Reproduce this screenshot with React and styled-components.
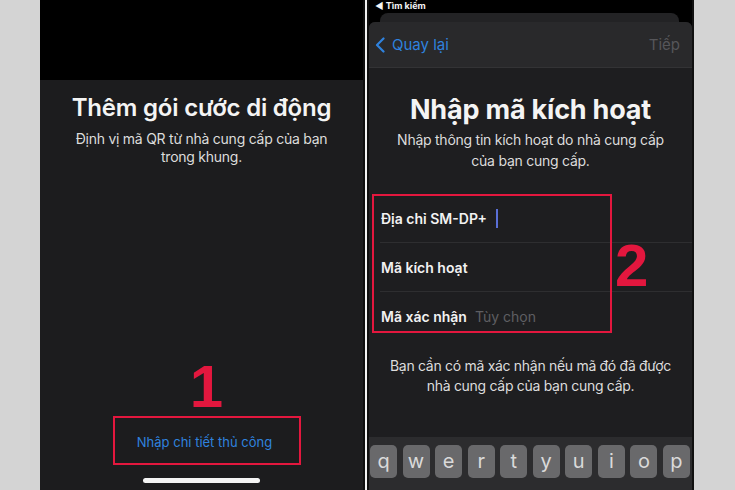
import React from "react";
import styled, { createGlobalStyle } from "styled-components";

const GlobalStyle = createGlobalStyle`
  * { box-sizing: border-box; }
  html, body { margin: 0; padding: 0; }
  body {
    width: 735px;
    height: 490px;
    overflow: hidden;
    background: #d4d4d4;
    font-family: Inter, "Noto Sans", sans-serif;
  }
`;

const keys = ["q", "w", "e", "r", "t", "y", "u", "i", "o", "p"];

const App = () => {
    return (
        <>
            <GlobalStyle />
            <Page>
                <Phone width={323}>
                    <Camera />
                    <ScanBody>
                        <Title size={24}>Thêm gói cước di động</Title>
                        <Subtitle gap={7}>
                            Định vị mã QR từ nhà cung cấp của bạn
                            <br />
                            trong khung.
                        </Subtitle>
                        <BottomGroup>
                            <Numeral>1</Numeral>
                            <ManualBox>
                                <LinkText>Nhập chi tiết thủ công</LinkText>
                            </ManualBox>
                            <HomeBar />
                        </BottomGroup>
                    </ScanBody>
                </Phone>
                <Divider />
                <Phone width={323} edge>
                    <StatusBar>◄ Tìm kiếm</StatusBar>
                    <BackCard />
                    <Sheet>
                        <NavBar>
                            <BackButton>
                                <svg width="10" height="16" viewBox="0 0 10 16" fill="none">
                                    <path d="M8.5 1.5L2 8l6.5 6.5" stroke="#2f82de" strokeWidth="2.2" strokeLinecap="round" strokeLinejoin="round" />
                                </svg>
                                Quay lại
                            </BackButton>
                            <NextButton>Tiếp</NextButton>
                        </NavBar>
                        <SheetBody>
                            <Title size={27} top={25} bold>Nhập mã kích hoạt</Title>
                            <Subtitle gap={3} lh={21}>
                                Nhập thông tin kích hoạt do nhà cung cấp
                                <br />
                                của bạn cung cấp.
                            </Subtitle>
                            <Form>
                                <Row>
                                    <Label>Địa chỉ SM-DP+</Label>
                                    <Cursor />
                                </Row>
                                <Row>
                                    <Label>Mã kích hoạt</Label>
                                </Row>
                                <Row last>
                                    <Label>Mã xác nhận</Label>
                                    <Placeholder>Tùy chọn</Placeholder>
                                </Row>
                                <RedFrame />
                                <FormNumeral>2</FormNumeral>
                            </Form>
                            <Footnote>
                                Bạn cần có mã xác nhận nếu mã đó đã được
                                <br />
                                nhà cung cấp của bạn cung cấp.
                            </Footnote>
                            <Keyboard>
                                {keys.map(k => <Key key={k}>{k}</Key>)}
                            </Keyboard>
                        </SheetBody>
                    </Sheet>
                </Phone>
            </Page>
        </>
    );
};

const Page = styled.div`
    display: flex;
    height: 490px;
    padding-left: 40px;
`;

const Phone = styled.div`
    width: ${p => p.width}px;
    height: 490px;
    display: flex;
    flex-direction: column;
    background: #000;
    overflow: hidden;
    border-right: ${p => (p.edge ? "2px solid #111" : "none")};
    box-sizing: content-box;
`;

const Divider = styled.div`
    width: 6px;
    height: 490px;
    background: #f2f2f2;
    border-left: 2px solid #0e0e0e;
    border-right: 2px solid #0e0e0e;
`;

const Camera = styled.div`
    height: 80px;
    flex-shrink: 0;
    background: #000;
`;

const ScanBody = styled.div`
    flex: 1;
    display: flex;
    flex-direction: column;
    align-items: center;
    background: #1c1c1e;
    padding-top: 13px;
`;

const Title = styled.h1`
    margin: ${p => p.top || 0}px 0 0;
    font-size: ${p => p.size}px;
    line-height: ${p => p.size + 6}px;
    font-weight: ${p => (p.bold ? 700 : 600)};
    color: #f4f4f4;
    text-align: center;
    letter-spacing: -0.2px;
`;

const Subtitle = styled.p`
    margin: ${p => p.gap}px 0 0;
    font-size: 14px;
    line-height: ${p => p.lh || 18}px;
    color: #dcdcdc;
    text-align: center;
    letter-spacing: -0.25px;
`;

const BottomGroup = styled.div`
    margin-top: auto;
    display: flex;
    flex-direction: column;
    align-items: center;
    padding-bottom: 7px;
`;

const Numeral = styled.div`
    font-family: "Liberation Sans", Arial, sans-serif;
    font-weight: 700;
    font-size: 60px;
    line-height: 59px;
    color: #e3173e;
    margin-left: 10px;
`;

const ManualBox = styled.div`
    width: 188px;
    height: 49px;
    border: 2px solid #e3173e;
    display: flex;
    align-items: center;
    justify-content: center;
    margin-left: 10px;
`;

const LinkText = styled.span`
    font-size: 13px;
    color: #2f82de;
    padding-top: 3px;
    margin-left: -4px;
`;

const HomeBar = styled.div`
    width: 117px;
    height: 5px;
    border-radius: 3px;
    background: #f4f4f4;
    margin-top: 13px;
`;

const StatusBar = styled.div`
    height: 13px;
    flex-shrink: 0;
    padding-left: 6px;
    font-size: 9px;
    line-height: 11px;
    font-weight: 700;
    color: #f4f4f4;
    background: #000;
`;

const BackCard = styled.div`
    height: 9px;
    flex-shrink: 0;
    margin: 0 13px 0 11px;
    border-radius: 8px 8px 0 0;
    background: #232325;
`;

const Sheet = styled.div`
    flex: 1;
    display: flex;
    flex-direction: column;
    border-radius: 6px 6px 0 0;
    overflow: hidden;
    background: #1e1e20;
`;

const NavBar = styled.div`
    height: 46px;
    flex-shrink: 0;
    display: flex;
    align-items: center;
    justify-content: space-between;
    padding: 0 12px 0 6px;
    background: #29292b;
    border-bottom: 1px solid #333335;
`;

const BackButton = styled.div`
    display: flex;
    align-items: center;
    gap: 7px;
    font-size: 15px;
    color: #2f82de;
`;

const NextButton = styled.div`
    font-size: 15px;
    color: #56565a;
`;

const SheetBody = styled.div`
    flex: 1;
    display: flex;
    flex-direction: column;
    align-items: center;
`;

const Form = styled.div`
    position: relative;
    align-self: stretch;
    margin-top: 23px;
`;

const Row = styled.div`
    height: 49px;
    display: flex;
    align-items: center;
    gap: 8px;
    padding-left: 12px;
    position: relative;
    &::after {
        content: "";
        display: ${p => (p.last ? "none" : "block")};
        position: absolute;
        left: 11px;
        right: 0;
        bottom: 0;
        height: 1px;
        background: #2e2e30;
    }
`;

const Label = styled.span`
    font-size: 14px;
    font-weight: 600;
    color: #f2f2f2;
`;

const Placeholder = styled.span`
    font-size: 14px;
    color: #5e5e62;
`;

const Cursor = styled.span`
    width: 2px;
    height: 19px;
    background: #5a6fd6;
    margin-left: 1px;
`;

const RedFrame = styled.div`
    position: absolute;
    left: 3px;
    top: 0;
    width: 240px;
    height: 139px;
    border: 2px solid #e3173e;
    pointer-events: none;
`;

const FormNumeral = styled.div`
    position: absolute;
    left: 246px;
    top: 42px;
    font-family: "Liberation Sans", Arial, sans-serif;
    font-weight: 700;
    font-size: 60px;
    line-height: 60px;
    color: #e3173e;
`;

const Footnote = styled.p`
    margin: 15px 0 0;
    font-size: 14px;
    line-height: 20px;
    color: #dcdcdc;
    text-align: center;
    letter-spacing: -0.3px;
`;

const Keyboard = styled.div`
    margin-top: auto;
    align-self: stretch;
    height: 53px;
    display: flex;
    justify-content: space-between;
    padding: 8px 2px 0 1px;
    background: #2c2c2e;
`;

const Key = styled.div`
    width: 27px;
    height: 33px;
    border-radius: 5px;
    background: #69696b;
    display: flex;
    align-items: center;
    justify-content: center;
    font-size: 20px;
    color: #dadada;
    padding-bottom: 2px;
`;

export default App;
